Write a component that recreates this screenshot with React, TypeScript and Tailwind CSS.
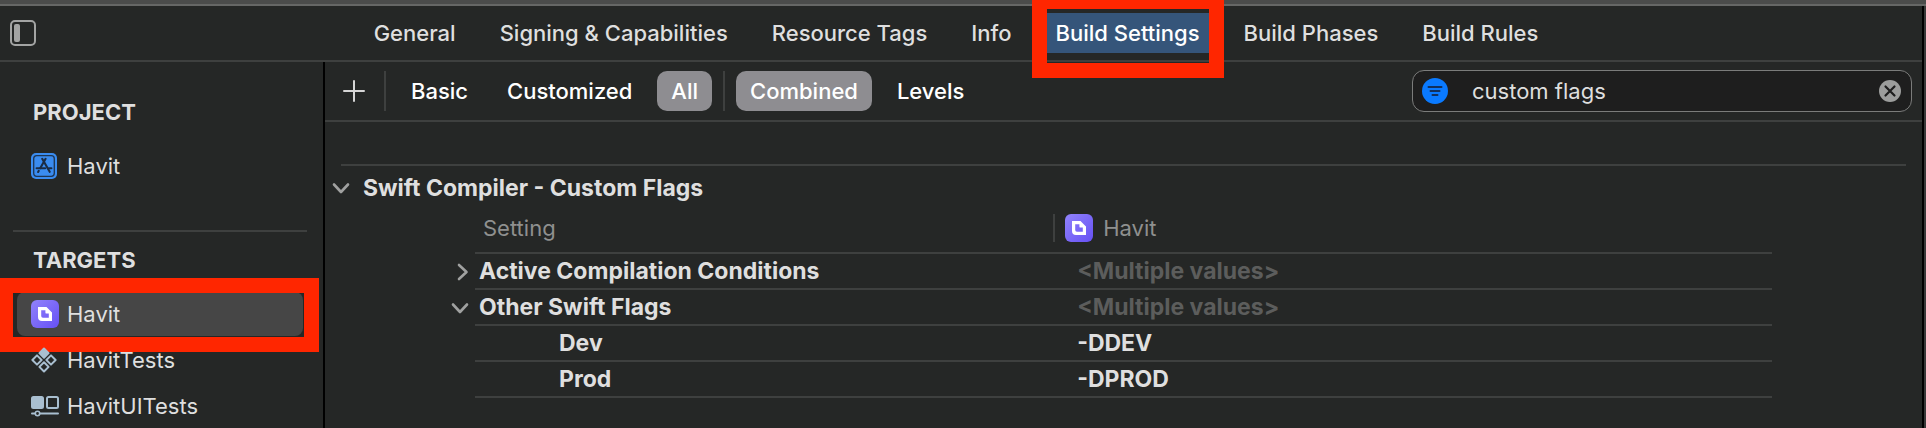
import { useState } from 'react'
import type { ReactNode } from 'react'

const TABS = [
  'General',
  'Signing & Capabilities',
  'Resource Tags',
  'Info',
  'Build Settings',
  'Build Phases',
  'Build Rules',
]

type SettingRow = {
  name: string
  value: string
  state?: 'open' | 'closed'
  muted?: boolean
}

const ROWS: SettingRow[] = [
  { name: 'Active Compilation Conditions', value: '<Multiple values>', state: 'closed', muted: true },
  { name: 'Other Swift Flags', value: '<Multiple values>', state: 'open', muted: true },
  { name: 'Dev', value: '-DDEV' },
  { name: 'Prod', value: '-DPROD' },
]

function SidebarIcon() {
  return (
    <svg width="26" height="26" viewBox="0 0 26 26" fill="none">
      <rect x="1" y="1" width="24" height="24" rx="4" stroke="#a3a4a3" strokeWidth="2" />
      <rect x="4" y="4" width="6" height="18" rx="2" fill="#a3a4a3" />
    </svg>
  )
}

function ProjectIcon() {
  return (
    <svg width="26" height="26" viewBox="0 0 26 26" fill="none">
      <rect width="26" height="26" rx="5" fill="#3a8cf0" />
      <rect x="2.7" y="2.7" width="20.6" height="20.6" rx="3" stroke="#1d3553" strokeWidth="1.3" />
      <g stroke="#1b2c44" strokeWidth="2.1" strokeLinecap="round">
        <path d="M11.2 5.8 L18.7 18.8" />
        <path d="M14.6 5.8 L9.2 15.2" />
        <path d="M5.6 15.3 H14.2" />
        <path d="M18 15.3 H20.4" />
        <path d="M7.8 17.8 L7.1 19" />
      </g>
    </svg>
  )
}

function AppIcon() {
  return (
    <svg width="28" height="28" viewBox="0 0 28 28" fill="none">
      <defs>
        <linearGradient id="app-icon" x1="0" y1="0" x2="1" y2="1">
          <stop offset="0" stopColor="#9183fb" />
          <stop offset="1" stopColor="#6650f4" />
        </linearGradient>
      </defs>
      <rect width="28" height="28" rx="6" fill="url(#app-icon)" />
      <path
        fillRule="evenodd"
        fill="#fff"
        d="M7 7 H15.5 L21 12.5 V21 H11 A4 4 0 0 1 7 17 Z M10.2 10.2 V16 A1.8 1.8 0 0 0 12 17.8 H17.8 V13.6 H15.6 A1.2 1.2 0 0 1 14.4 12.4 V10.2 Z"
      />
    </svg>
  )
}

function TestsIcon() {
  return (
    <svg width="26" height="26" viewBox="0 0 26 26" fill="none" stroke="#a9bfd0" strokeWidth="2" strokeLinejoin="round">
      <path d="M13 1.5 L17.6 6.1 L13 10.7 L8.4 6.1 Z" fill="#a9bfd0" />
      <path d="M6 8.4 L10.6 13 L6 17.6 L1.4 13 Z" />
      <path d="M20 8.4 L24.6 13 L20 17.6 L15.4 13 Z" />
      <path d="M13 15.3 L17.6 19.9 L13 24.5 L8.4 19.9 Z" />
    </svg>
  )
}

function UITestsIcon() {
  return (
    <svg width="28" height="22" viewBox="0 0 28 22" fill="none" stroke="#a9bfd0">
      <rect x="1" y="2" width="11" height="11" rx="1.5" fill="#a9bfd0" strokeWidth="2" />
      <rect x="16" y="2" width="11" height="11" rx="1.5" strokeWidth="2" />
      <path d="M1 18.5 H4 M9 18.5 H27" strokeWidth="2" strokeLinecap="round" />
      <circle cx="6.5" cy="18.5" r="2.2" strokeWidth="1.6" />
    </svg>
  )
}

function Chevron({ open }: { open: boolean }) {
  return (
    <svg width="18" height="18" viewBox="0 0 18 18" fill="none" stroke="#a0a1a0" strokeWidth="2.6" strokeLinecap="round" strokeLinejoin="round">
      <path d={open ? 'M2 5.5 L9 13 L16 5.5' : 'M8 2 L15.5 9 L8 16'} />
    </svg>
  )
}

function SidebarItem({ icon, label, selected }: { icon: ReactNode; label: string; selected?: boolean }) {
  return (
    <li className="relative">
      <button
        type="button"
        className={`flex h-[44px] w-full items-center rounded-lg pl-3.5 text-left ${selected ? 'bg-[#464646]' : ''}`}
      >
        <span className="flex w-9 items-center">{icon}</span>
        {label}
      </button>
      {/* highlight frame */}
      {selected && (
        <span className="pointer-events-none absolute -top-3.5 -right-4 -bottom-4 -left-[17px] border-x-[15px] border-y-[15px] border-l-[13px] border-[#ff2600]" />
      )}
    </li>
  )
}

function FilterButton({ label, active }: { label: string; active?: boolean }) {
  return (
    <button
      type="button"
      className={`h-10 rounded-[10px] px-3.5 font-medium whitespace-nowrap text-white ${active ? 'bg-[#8e8d91]' : ''}`}
    >
      {label}
    </button>
  )
}

export default function App() {
  const [query, setQuery] = useState('custom flags')

  return (
    <div className="flex min-h-screen flex-col overflow-hidden bg-[#252726] font-['Inter','Liberation_Sans',sans-serif] text-[22px] leading-7 text-[#dfdfdf]">
      <div className="h-1.5 shrink-0 border-b-2 border-[#666766] bg-[#4b4c4b]" />

      <div className="flex flex-1 border-r-2 border-[#383939]">
        <div className="flex min-w-0 flex-1 flex-col border-r-2 border-black">
          {/* editor tabs */}
          <header className="grid h-14 grid-cols-[1fr_auto_1fr] items-center border-b-2 border-[#3e403f] pr-5 pl-2.5">
            <button type="button" aria-label="Toggle sidebar" className="w-[26px]">
              <SidebarIcon />
            </button>
            <nav className="flex font-medium">
              {TABS.map((tab) => {
                const current = tab === 'Build Settings'
                return (
                  <div key={tab} className="relative">
                    <button
                      type="button"
                      className={`h-10 px-[22px] whitespace-nowrap ${current ? 'bg-[#35557a] text-white' : ''}`}
                    >
                      {tab}
                    </button>
                    {current && (
                      <span className="pointer-events-none absolute -inset-x-0.5 -top-3.5 -bottom-[25px] z-10 border-[15px] border-t-[10px] border-[#ff2600]" />
                    )}
                  </div>
                )
              })}
            </nav>
          </header>

          <div className="flex flex-1">
            <aside className="w-[325px] shrink-0 border-r-2 border-black">
              <h2 className="pt-9 pl-[33px] font-bold">PROJECT</h2>
              <ul className="mt-[18px] pr-5 pl-[17px]">
                <SidebarItem icon={<ProjectIcon />} label="Havit" />
              </ul>
              <hr className="mt-[42px] mr-4 ml-[13px] border-t-2 border-[#3e403f]" />
              <h2 className="pt-3.5 pl-[33px] font-bold">TARGETS</h2>
              <ul className="mt-[18px] flex flex-col gap-0.5 pr-5 pl-[17px]">
                <SidebarItem icon={<AppIcon />} label="Havit" selected />
                <SidebarItem icon={<TestsIcon />} label="HavitTests" />
                <SidebarItem icon={<UITestsIcon />} label="HavitUITests" />
              </ul>
            </aside>

            <main className="min-w-0 flex-1">
              {/* filter bar */}
              <div className="flex h-[60px] items-center gap-[11px] border-b-2 border-[#3e403f] pr-2.5 pl-[18px]">
                <button type="button" aria-label="Add" className="mr-2">
                  <svg width="22" height="22" viewBox="0 0 22 22" stroke="#d6d6d6" strokeWidth="2" strokeLinecap="round">
                    <path d="M11 1 V21 M1 11 H21" />
                  </svg>
                </button>
                <span className="h-10 w-0.5 bg-[#3e403f]" />
                <FilterButton label="Basic" />
                <FilterButton label="Customized" />
                <FilterButton label="All" active />
                <span className="h-10 w-0.5 bg-[#3e403f]" />
                <FilterButton label="Combined" active />
                <FilterButton label="Levels" />
                <label className="ml-auto flex h-[42px] w-[500px] items-center rounded-xl border border-[#7b7c7b] bg-[#1e1e1e] pr-2.5 pl-[9px]">
                  <svg width="26" height="26" viewBox="0 0 26 26" stroke="#12305c" strokeWidth="2" strokeLinecap="round">
                    <circle cx="13" cy="13" r="13" fill="#0a7aff" stroke="none" />
                    <path d="M6.5 9 H19.5 M8.5 13 H17.5 M10.5 17 H15.5" />
                  </svg>
                  <input
                    type="text"
                    aria-label="Filter settings"
                    value={query}
                    onChange={(e) => setQuery(e.target.value)}
                    className="ml-6 min-w-0 flex-1 bg-transparent outline-none"
                  />
                  <button type="button" aria-label="Clear" onClick={() => setQuery('')}>
                    <svg width="22" height="22" viewBox="0 0 22 22" stroke="#1e1e1e" strokeWidth="2.2" strokeLinecap="round">
                      <circle cx="11" cy="11" r="11" fill="#9c9d9c" stroke="none" />
                      <path d="M6.5 6.5 L15.5 15.5 M15.5 6.5 L6.5 15.5" />
                    </svg>
                  </button>
                </label>
              </div>

              <hr className="mt-[42px] mr-4 ml-4 border-t-2 border-[#3e403f]" />
              <div className="flex h-[38px] items-center gap-[13px] pt-1.5 pl-[7px]">
                <button type="button" aria-label="Collapse section">
                  <Chevron open />
                </button>
                <h3 className="text-[23px] font-bold">Swift Compiler - Custom Flags</h3>
              </div>

              <div className="pr-[150px] pl-[124px]">
                <table className="w-full table-fixed border-separate border-spacing-0 text-left">
                  <colgroup>
                    <col className="w-[26px]" />
                    <col className="w-[43.7%]" />
                    <col />
                  </colgroup>
                  <thead className="text-[#8f908f]">
                    <tr className="h-[50px]">
                      <td />
                      <th className="border-b-2 border-[#3e403f] pl-2 font-normal">Setting</th>
                      <th className="border-b-2 border-[#3e403f] font-normal">
                        <div className="flex h-7 items-center">
                          <span className="mr-2.5 h-7 w-0.5 bg-[#3e403f]" />
                          <AppIcon />
                          <span className="ml-2.5">Havit</span>
                        </div>
                      </th>
                    </tr>
                  </thead>
                  <tbody>
                    {ROWS.map((row) => (
                      <tr key={row.name} className="h-9 text-[23px] font-bold">
                        <td className="p-0 align-middle">
                          {row.state && (
                            <button type="button" aria-label={`Toggle ${row.name}`} className="block pl-0.5">
                              <Chevron open={row.state === 'open'} />
                            </button>
                          )}
                        </td>
                        <td className={`border-b-2 border-[#3e403f] ${row.state ? 'pl-1' : 'pl-[84px]'}`}>{row.name}</td>
                        <td className={`border-b-2 border-[#3e403f] pl-6 ${row.muted ? 'text-[#5c5d5c]' : ''}`}>{row.value}</td>
                      </tr>
                    ))}
                  </tbody>
                </table>
              </div>
            </main>
          </div>
        </div>
      </div>
    </div>
  )
}
